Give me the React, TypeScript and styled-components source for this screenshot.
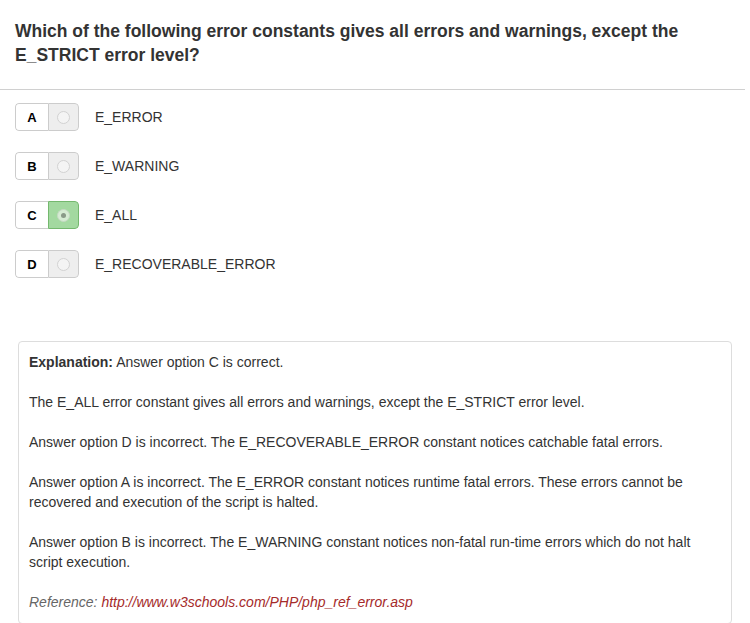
import React from "react";
import styled, { createGlobalStyle } from "styled-components";

const Global = createGlobalStyle`
  html, body { margin: 0; padding: 0; background: #fff; }
  body { font-family: "Liberation Sans", Arial, sans-serif; color: #333; }
  * { box-sizing: border-box; }
`;

const Page = styled.div`
  width: 750px;
  padding: 19px 0 0 0;
`;

const Question = styled.h1`
  margin: 0;
  padding: 0 15px;
  font-size: 17.5px;
  line-height: 24px;
  font-weight: bold;
  color: #333;
`;

const Rule = styled.hr`
  margin: 22px 5px 0 0;
  border: 0;
  border-top: 1px solid #d0d0d0;
`;

const Options = styled.div`
  display: flex;
  flex-direction: column;
  gap: 21px;
  padding: 13px 15px 0 15px;
`;

const OptionRow = styled.label`
  display: flex;
  align-items: center;
  height: 28px;
  font-size: 14px;
`;

const Choice = styled.div`
  display: flex;
  height: 28px;
  width: 64px;
  border-radius: 4px;
  overflow: hidden;
`;

const Letter = styled.div`
  width: 33px;
  display: flex;
  align-items: center;
  justify-content: center;
  font-weight: bold;
  font-size: 13px;
  color: #000;
  border: 1px solid #ccc;
  border-right: 0;
  border-radius: 4px 0 0 4px;
  background: #fff;
`;

const RadioCell = styled.div<{ $checked: boolean }>`
  flex: 1;
  display: flex;
  align-items: center;
  justify-content: center;
  background: ${(p) => (p.$checked ? "#a3d9a0" : "#eee")};
  border: 1px solid ${(p) => (p.$checked ? "#74b86e" : "#ccc")};
  border-radius: 0 4px 4px 0;
`;

const Radio = styled.span<{ $checked: boolean }>`
  width: 13px;
  height: 13px;
  border-radius: 50%;
  border: 1px solid ${(p) => (p.$checked ? "#c6d9c4" : "#d2d2d2")};
  background: ${(p) => (p.$checked ? "#d6ecd3" : "#f4f4f4")};
  display: flex;
  align-items: center;
  justify-content: center;
  &::after {
    content: "";
    display: ${(p) => (p.$checked ? "block" : "none")};
    width: 5px;
    height: 5px;
    border-radius: 50%;
    background: #8a9a88;
  }
`;

const OptionText = styled.span`
  margin-left: 16px;
  color: #333;
`;

const Explanation = styled.div`
  margin: 63px 18px 0 18px;
  border: 1px solid #ddd;
  border-radius: 4px;
  padding: 10px 10px 11px 10px;
  font-size: 14px;
  line-height: 20px;
  color: #333;
  p { margin: 0 0 20px 0; }
  p:last-child { margin-bottom: 0; }
`;

const RefLine = styled.p`
  font-style: italic;
  color: #666;
  a { color: #a52a2a; text-decoration: none; }
`;

const options = [
  { l: "A", t: "E_ERROR", c: false },
  { l: "B", t: "E_WARNING", c: false },
  { l: "C", t: "E_ALL", c: true },
  { l: "D", t: "E_RECOVERABLE_ERROR", c: false },
];

export default function App() {
  return (
    <Page>
      <Global />
      <Question>
        Which of the following error constants gives all errors and warnings, except the E_STRICT error level?
      </Question>
      <Rule />
      <Options>
        {options.map((o) => (
          <OptionRow key={o.l}>
            <Choice>
              <Letter>{o.l}</Letter>
              <RadioCell $checked={o.c}>
                <Radio $checked={o.c} />
              </RadioCell>
            </Choice>
            <OptionText>{o.t}</OptionText>
          </OptionRow>
        ))}
      </Options>
      <Explanation>
        <p><b>Explanation:</b> Answer option C is correct.</p>
        <p>The E_ALL error constant gives all errors and warnings, except the E_STRICT error level.</p>
        <p>Answer option D is incorrect. The E_RECOVERABLE_ERROR constant notices catchable fatal errors.</p>
        <p>Answer option A is incorrect. The E_ERROR constant notices runtime fatal errors. These errors cannot be recovered and execution of the script is halted.</p>
        <p>Answer option B is incorrect. The E_WARNING constant notices non-fatal run-time errors which do not halt script execution.</p>
        <RefLine>
          Reference: <a href="#">http://www.w3schools.com/PHP/php_ref_error.asp</a>
        </RefLine>
      </Explanation>
    </Page>
  );
}
